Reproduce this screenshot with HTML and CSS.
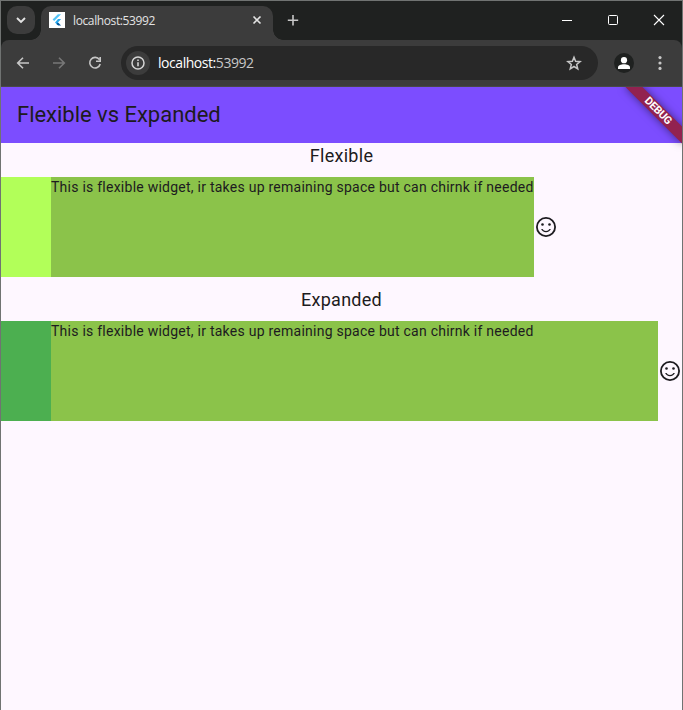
FILE: index.html
```html
<!DOCTYPE html>
<html lang="en">
<head>
<meta charset="utf-8">
<title>Flexible vs Expanded</title>
<link rel="stylesheet" href="styles.css">
</head>
<body>
<div class="window">
  <header class="tabs">
    <div class="tab-search"><svg width="28" height="28" viewBox="0 0 28 28"><path d="M10 12l4 4 4-4" fill="none" stroke="#e3e3e3" stroke-width="1.9"/></svg></div>
    <div class="tab">
      <svg class="favicon" width="16" height="16" viewBox="0 0 16 16"><path fill="#fff" d="M0 0h16v16H0z"/><path fill="#54c5f8" d="M8.9 2.2h3.2L5.2 9.1 3.6 7.5z"/><path fill="#29a9ee" d="M9 7.1h3.1L8.9 10.4l1.6 1.6-1.6 1.2-2.9-2.8z"/><path fill="#01579b" d="M8.9 10.4l3.2 3.2H9.3l-1.9-1.7z"/></svg>
      <span class="tab-title">localhost:53992</span>
      <svg class="tab-close" width="16" height="16" viewBox="0 0 16 16"><path d="M4.5 4.5l7 7m0-7l-7 7" stroke="#e3e3e3" stroke-width="1.6"/></svg>
    </div>
    <svg class="new-tab" width="16" height="16" viewBox="0 0 16 16"><path d="M8 3v10.5M2.8 8.2h10.4" stroke="#c7c7c7" stroke-width="1.6"/></svg>
    <div class="controls">
      <svg width="46" height="39" viewBox="0 0 46 39"><path d="M18 19.5h10" stroke="#fff"/></svg>
      <svg width="46" height="39" viewBox="0 0 46 39"><rect x="18.5" y="14.5" width="9" height="9" rx="1" fill="none" stroke="#fff"/></svg>
      <svg width="46" height="39" viewBox="0 0 46 39"><path d="M18 14l10 10m0-10l-10 10" stroke="#fff" stroke-width="1.1"/></svg>
    </div>
  </header>
  <nav class="toolbar">
    <svg class="nav-icon" width="16" height="16" viewBox="0 0 16 16"><path d="M14 8H3M8 2.7L2.7 8 8 13.3" fill="none" stroke="#c7c7c7" stroke-width="1.6"/></svg>
    <svg class="nav-icon" width="16" height="16" viewBox="0 0 16 16"><path d="M2 8h11M8 2.7L13.3 8 8 13.3" fill="none" stroke="#777" stroke-width="1.6"/></svg>
    <svg class="nav-icon" width="16" height="16" viewBox="0 0 16 16"><path d="M12.4 4.6A5.3 5.3 0 1 0 13.2 9M13.2 2v4.2H9" fill="none" stroke="#c7c7c7" stroke-width="1.6"/></svg>
    <div class="address">
      <span class="info"><svg width="16" height="16" viewBox="0 0 16 16"><circle cx="8" cy="8" r="6" fill="none" stroke="#d5d5d5" stroke-width="1.5"/><path d="M8 7.3v4M8 4.5v1.6" stroke="#d5d5d5" stroke-width="1.6"/></svg></span>
      <span class="url">localhost:<span class="port">53992</span></span>
      <svg class="star" width="16" height="16" viewBox="0 0 16 16"><path d="M8 2.3l1.6 4 4.5.35-3.45 2.85 1.1 4.3L8 11.5l-3.75 2.3 1.1-4.3L1.9 6.65l4.5-.35z" fill="none" stroke="#c7c7c7" stroke-width="1.5"/></svg>
    </div>
    <svg class="profile" width="20" height="20" viewBox="0 0 20 20"><circle cx="10" cy="10" r="10" fill="#1f2120"/><circle cx="10" cy="7.2" r="3.1" fill="#fff"/><path d="M4 16v-1.6c0-2 3-3.2 6-3.2s6 1.2 6 3.2V16z" fill="#fff"/></svg>
    <svg class="more" width="16" height="16" viewBox="0 0 16 16"><g fill="#c7c7c7"><circle cx="8" cy="2.6" r="1.6"/><circle cx="8" cy="8" r="1.6"/><circle cx="8" cy="13.4" r="1.6"/></g></svg>
  </nav>
  <main class="app">
    <h1 class="app-bar">Flexible vs Expanded</h1>
    <div class="banner-clip"><div class="banner">DEBUG</div></div>
    <h2 class="heading">Flexible</h2>
    <div class="row">
      <div class="box lime"></div>
      <div class="fill">This is flexible widget, ir takes up remaining space but can chirnk if needed</div>
      <svg class="mood" width="24" height="24" viewBox="0 0 24 24"><circle cx="12" cy="12" r="9.1" fill="none" stroke="#1d1b20" stroke-width="1.8"/><circle cx="8.5" cy="9.5" r="1.3"/><circle cx="15.5" cy="9.5" r="1.3"/><path d="M12 16c-1.48 0-2.75-.81-3.45-2H7.1c.8 1.9 2.6 3.2 4.9 3.2s4.1-1.3 4.9-3.2h-1.45c-.7 1.19-1.97 2-3.45 2z"/></svg>
    </div>
    <h2 class="heading">Expanded</h2>
    <div class="row">
      <div class="box green"></div>
      <div class="fill expanded">This is flexible widget, ir takes up remaining space but can chirnk if needed</div>
      <svg class="mood" width="24" height="24" viewBox="0 0 24 24"><circle cx="12" cy="12" r="9.1" fill="none" stroke="#1d1b20" stroke-width="1.8"/><circle cx="8.5" cy="9.5" r="1.3"/><circle cx="15.5" cy="9.5" r="1.3"/><path d="M12 16c-1.48 0-2.75-.81-3.45-2H7.1c.8 1.9 2.6 3.2 4.9 3.2s4.1-1.3 4.9-3.2h-1.45c-.7 1.19-1.97 2-3.45 2z"/></svg>
    </div>
  </main>
</div>
</body>
</html>
```
FILE: styles.css
```css
* { box-sizing: border-box; }
body { margin: 0; overflow: hidden; }
svg { display: block; flex: none; }
.window {
  height: 710px;
  border: 1px solid #707372;
  border-bottom: 0;
  background: #1f2120;
  display: flex;
  flex-direction: column;
  font-family: "Open Sans", "Noto Sans", sans-serif;
}
.tabs { height: 39px; display: flex; padding-left: 6px; flex: none; }
.tab-search { width: 28px; height: 28px; margin-top: 5px; border-radius: 10px; background: #3c3c3c; }
.tab {
  position: relative;
  width: 232px;
  height: 34px;
  margin: 5px 0 0 6px;
  padding: 0 8px 6px;
  border-radius: 10px 10px 0 0;
  background: #3c3c3c;
  display: flex;
  align-items: center;
}
.tab::before, .tab::after {
  content: "";
  position: absolute;
  bottom: 0;
  width: 10px;
  height: 10px;
}
.tab::before { left: -10px; background: radial-gradient(circle at 0 0, transparent 9.5px, #3c3c3c 10px); }
.tab::after { right: -10px; background: radial-gradient(circle at 100% 0, transparent 9.5px, #3c3c3c 10px); }
.tab-title { margin: 1px 0 0 8px; font-size: 12px; line-height: 16px; color: #e3e3e3; letter-spacing: -0.38px; }
.tab-close { margin-left: auto; }
.new-tab { margin: 11px 0 0 12px; }
.controls { display: flex; margin-left: auto; }
.toolbar {
  height: 47px;
  flex: none;
  background: #3c3c3c;
  border-radius: 8px 8px 0 0;
  border-bottom: 1px solid #484848;
  display: flex;
  align-items: center;
  padding: 0 14px;
}
.nav-icon { margin-right: 20px; }
.address {
  width: 477px;
  height: 34px;
  margin-left: -2px;
  border-radius: 17px;
  background: #282828;
  display: flex;
  align-items: center;
  padding: 0 16px 0 5px;
}
.info { width: 24px; height: 24px; border-radius: 50%; background: #3c3c3c; padding: 4px; }
.url { margin-left: 8px; font-size: 14px; line-height: 20px; color: #fff; letter-spacing: -0.45px; }
.port { color: #c7c7c7; }
.star { margin-left: auto; }
.profile { margin-left: 16px; }
.more { margin-left: 18px; }
.app { position: relative; flex: 1; background: #fef7ff; color: #1d1b20; font-family: Roboto, sans-serif; }
.app-bar { margin: 0; height: 56px; padding-left: 16px; background: #7c4dff; font-size: 22px; line-height: 56px; font-weight: 400; letter-spacing: -0.02px; }
.banner-clip { position: absolute; top: 0; right: 0; width: 76px; height: 76px; overflow: hidden; }
.banner {
  position: absolute;
  left: 36px;
  top: 28px;
  width: 80px;
  height: 12px;
  transform: rotate(45deg);
  transform-origin: 40px -28px;
  background: rgb(146, 34, 80);
  box-shadow: 0 0 8px rgba(0, 0, 0, 0.5);
  color: #fff;
  font-size: 10.8px;
  line-height: 12px;
  font-weight: 700;
  letter-spacing: -0.2px;
  text-align: center;
}
.heading { margin: 0 0 8px; font-size: 18px; line-height: 26px; font-weight: 400; letter-spacing: 0.28px; text-align: center; }
.row { display: flex; align-items: center; margin-bottom: 10px; }
.box { width: 50px; height: 100px; flex: none; }
.lime { background: #b2ff59; }
.green { background: #4caf50; }
.fill { height: 100px; background: #8bc34a; font-size: 14px; line-height: 20px; letter-spacing: 0.247px; white-space: nowrap; }
.expanded { flex: 1; }
.mood { fill: #1d1b20; }
```
